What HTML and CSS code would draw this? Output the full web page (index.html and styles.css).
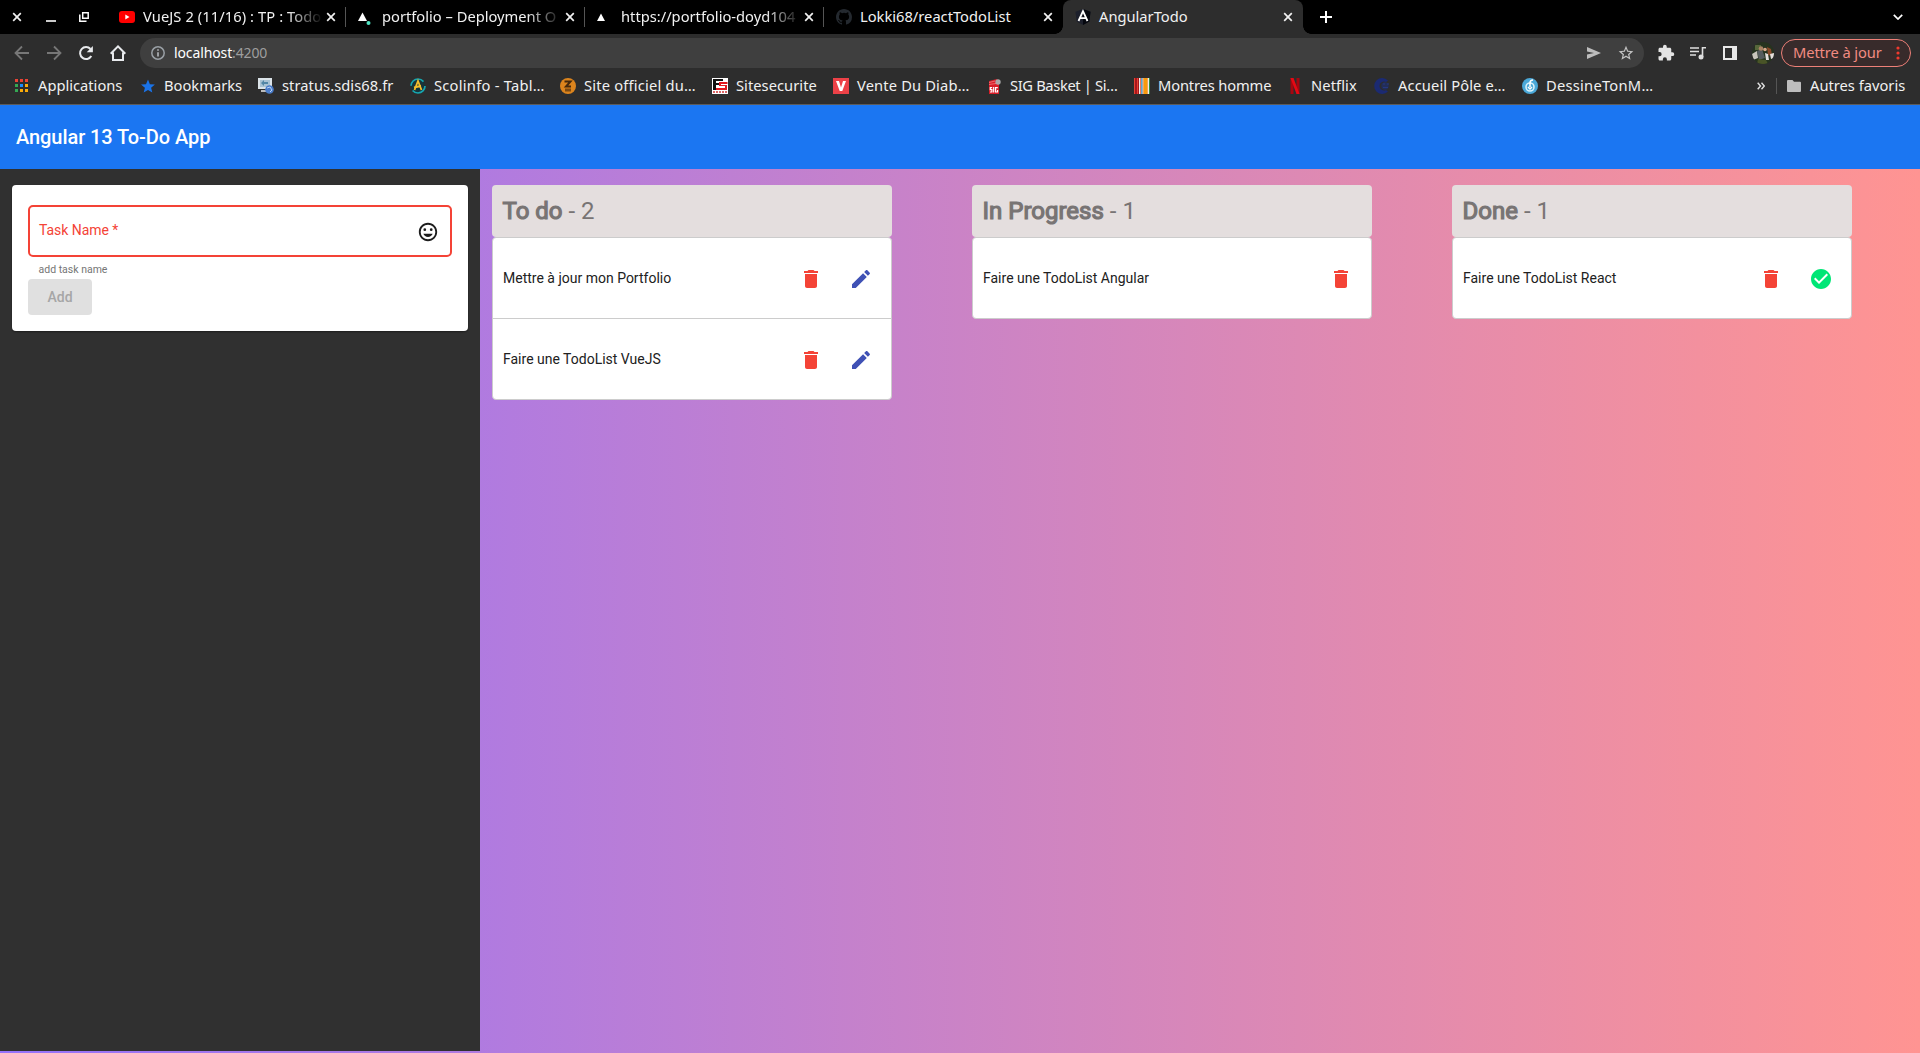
FILE: index.html
```html
<!DOCTYPE html>
<html lang="fr">
<head>
<meta charset="utf-8">
<title>AngularTodo</title>
<link rel="stylesheet" href="styles.css">
</head>
<body>
<svg class="defs" width="0" height="0">
  <symbol id="close" viewBox="0 0 10 10"><path d="M1.2 1.2l7.6 7.6M8.8 1.2L1.2 8.8" stroke="currentColor" stroke-width="1.7" fill="none"/></symbol>
  <symbol id="trash" viewBox="0 0 24 24"><path fill="currentColor" d="M6 19c0 1.1.9 2 2 2h8c1.100 0 2-.9 2-2V7H6v12zM19 4h-3.500l-1-1h-5l-1 1H5v2h14V4z"/></symbol>
  <symbol id="pencil" viewBox="0 0 24 24"><path fill="currentColor" d="M3 17.250V21h3.750L17.810 9.940l-3.750-3.750L3 17.250zM20.710 7.040c.39-.39.39-1.020 0-1.410l-2.340-2.340c-.39-.39-1.020-.39-1.410 0l-1.830 1.830 3.750 3.750 1.830-1.830z"/></symbol>
  <symbol id="done" viewBox="0 0 24 24"><path fill="currentColor" d="M12 2C6.480 2 2 6.480 2 12s4.480 10 10 10 10-4.480 10-10S17.520 2 12 2zm-2 15l-5-5 1.410-1.410L10 14.170l7.590-7.590L19 8l-9 9z"/></symbol>
</svg>

<header class="browser">
  <div class="tabstrip">
    <div class="window-buttons">
      <svg width="10" height="10"><use href="#close"/></svg>
      <svg width="10" height="10" viewBox="0 0 10 10"><path d="M0 9h10" stroke="#fff" stroke-width="1.600"/></svg>
      <svg width="10" height="10" viewBox="0 0 10 10" fill="none" stroke="#fff" stroke-width="1.500"><path d="M3.700.8h5.500v5.500H3.700zM.8 2.500v6.700h6.700"/></svg>
    </div>
    <div class="tab">
      <svg class="fav" viewBox="0 0 16 16"><rect y="2" width="16" height="12" rx="3" fill="#f00"/><path d="M6.300 5.500v5L10.500 8z" fill="#fff"/></svg>
      <span class="tab-title t1">VueJS 2 (11/16) : TP : Todo</span>
      <svg class="x" width="10" height="10"><use href="#close"/></svg>
    </div>
    <div class="tab">
      <svg class="fav" viewBox="0 0 16 16"><path d="M4.500 3.500L9 12H0z" fill="#fff"/><circle cx="10.500" cy="14" r="2" fill="#50e3c2"/></svg>
      <span class="tab-title t2">portfolio – Deployment O</span>
      <svg class="x" width="10" height="10"><use href="#close"/></svg>
    </div>
    <div class="tab">
      <svg class="fav" viewBox="0 0 16 16"><path d="M4 4.500L8 12H0z" fill="#fff"/></svg>
      <span class="tab-title t3">https://portfolio-doyd104</span>
      <svg class="x" width="10" height="10"><use href="#close"/></svg>
    </div>
    <div class="tab last">
      <svg class="fav" viewBox="0 0 16 16"><path fill="#24292f" d="M8 0C3.580 0 0 3.580 0 8c0 3.540 2.290 6.530 5.470 7.590.4.07.55-.17.55-.38 0-.19-.01-.82-.01-1.490-2.010.37-2.530-.49-2.690-.94-.09-.23-.48-.94-.82-1.130-.28-.15-.68-.52-.01-.53.63-.01 1.080.58 1.230.82.72 1.210 1.870.87 2.330.66.07-.52.28-.87.51-1.070-1.780-.2-3.640-.89-3.640-3.950 0-.87.31-1.590.82-2.150-.08-.2-.36-1.020.08-2.120 0 0 .67-.21 2.200.82a7.600 7.600 0 0 1 4 0c1.530-1.040 2.200-.82 2.200-.82.44 1.100.16 1.920.08 2.120.51.56.82 1.270.82 2.150 0 3.070-1.870 3.750-3.650 3.950.29.25.54.73.54 1.480 0 1.070-.01 1.930-.01 2.200 0 .21.15.46.55.38A8 8 0 0 0 16 8c0-4.420-3.580-8-8-8z"/></svg>
      <span class="tab-title t4">Lokki68/reactTodoList</span>
      <svg class="x" width="10" height="10"><use href="#close"/></svg>
    </div>
    <div class="tab active">
      <svg class="fav" viewBox="0 0 16 16"><path d="M8 0l7.500 2.700-1.200 9.800L8 16l-6.300-3.500L.5 2.700z" fill="#1c1f2b"/><path d="M8 0l7.500 2.700-1.200 9.800L8 16z" fill="#05070e"/><path d="M3.500 12L8 2.200 12.500 12M5.500 9.200h5" stroke="#fff" stroke-width="1.800" fill="none"/></svg>
      <span class="tab-title t5">AngularTodo</span>
      <svg class="x" width="10" height="10"><use href="#close"/></svg>
    </div>
    <svg class="new-tab" width="12" height="12" viewBox="0 0 12 12"><path d="M6 0v12M0 6h12" stroke="#fff" stroke-width="2"/></svg>
    <svg class="chevron" width="10" height="6" viewBox="0 0 10 6"><path d="M.8.8L5 5 9.200.8" stroke="#fff" stroke-width="1.700" fill="none"/></svg>
  </div>

  <div class="toolbar">
    <div class="nav">
      <svg class="dim" viewBox="0 0 16 16"><path d="M15 8H2M8 1.500L1.500 8 8 14.500"/></svg>
      <svg class="dim" viewBox="0 0 16 16"><path d="M1 8h13M8 1.500L14.500 8 8 14.500"/></svg>
      <svg viewBox="0 0 16 16"><path d="M13.300 11A6 6 0 1 1 12.500 4"/><path d="M14.900 1v6.200H8.700z" fill="#e8eaed" stroke="none"/></svg>
      <svg viewBox="0 0 16 16"><path d="M3 7.500V15h10V7.500M.7 8.700L8 1.400l7.300 7.300"/></svg>
    </div>
    <div class="omnibox">
      <svg width="14" height="14" viewBox="0 0 14 14"><circle cx="7" cy="7" r="6.200" fill="none" stroke="#9aa0a6" stroke-width="1.500"/><path d="M7 6.200v4.300M7 3.300v1.500" stroke="#bdc1c6" stroke-width="1.500"/></svg>
      <span class="url">localhost<i>:4200</i></span>
      <svg class="send" width="14" height="12" viewBox="0 0 14 12"><path d="M0 0l14 6-14 6V7.500L7 6 0 4.500z" fill="#bdbdbd"/></svg>
      <svg width="16" height="16" viewBox="0 0 24 24"><path fill="#c4c4c4" d="M23 9.240l-7.910-.68L12 1.300 8.910 8.570 1 9.240l6 5.200L5.200 22.200 12 18.080l6.800 4.120-1.790-7.760L23 9.240zM12 15.900l-4.100 2.480 1.090-4.660-3.610-3.130 4.760-.41L12 5.800l1.870 4.390 4.760.41-3.610 3.130 1.090 4.660z"/></svg>
    </div>
    <div class="actions">
      <svg width="18" height="18" viewBox="0 0 24 24"><path fill="#e4e4e4" d="M20.500 11H19V7c0-1.100-.9-2-2-2h-4V3.500a2.500 2.500 0 0 0-5 0V5H4c-1.100 0-2 .9-2 2v3.800h1.500a2.700 2.700 0 0 1 0 5.400H2V20c0 1.100.9 2 2 2h3.800v-1.500a2.700 2.700 0 0 1 5.400 0V22H17c1.100 0 2-.9 2-2v-4h1.500a2.500 2.500 0 0 0 0-5z"/></svg>
      <svg width="16" height="14" viewBox="0 0 16 14"><path d="M0 2h9M0 5.500h9M0 9h6M12.500 11V1.800H16" stroke="#dedede" stroke-width="1.600" fill="none"/><circle cx="11" cy="11" r="2.500" fill="#dedede"/></svg>
      <svg width="14" height="14" viewBox="0 0 14 14"><path d="M0 0h14v14H0zM2 2v10h7V2z" fill="#e8e8e8" fill-rule="evenodd"/></svg>
      <svg width="22" height="22" viewBox="0 0 22 22"><clipPath id="face"><circle cx="11" cy="11" r="11"/></clipPath><g clip-path="url(#face)"><rect width="22" height="22" fill="#26331f"/><path d="M3 3h6v5H3z" fill="#56673b"/><path d="M0 12l5-3 1 7-5 2z" fill="#c9c5bd"/><path d="M5 9l5-2 3 9-6 2z" fill="#555b5d"/><circle cx="9" cy="6.500" r="2.300" fill="#a88264"/><circle cx="13" cy="7.500" r="1.800" fill="#d3a487"/><path d="M15 5l4 2 1 7-4-1z" fill="#8a4a29"/><path d="M13 11l3 1 1 6h-3zM18 12l4-1v5l-3 1z" fill="#e4dfdc"/><path d="M6 17l8 1 2 4H5z" fill="#495427"/></g></svg>
    </div>
    <div class="update"><span>Mettre à jour</span><svg width="4" height="14" viewBox="0 0 4 14" fill="#f03a2e"><circle cx="2" cy="2" r="1.600"/><circle cx="2" cy="7" r="1.600"/><circle cx="2" cy="12" r="1.600"/></svg></div>
  </div>

  <nav class="bookmarks">
    <div class="bm b1"><svg viewBox="0 0 16 16"><path d="M1 1h3v3H1zM6 1h3v3H6zM11 1h3v3h-3z" fill="#ea4335"/><path d="M1 6h3v3H1zM1 11h3v3H1z" fill="#34a853"/><path d="M6 6h3v3H6z" fill="#1a8cff"/><path d="M11 6h3v3h-3zM6 11h3v3H6zM11 11h3v3h-3z" fill="#fbab09"/></svg><span>Applications</span></div>
    <div class="bm b2"><svg viewBox="0 0 16 16"><path d="M8 1.500l1.900 4.700 5 .3-3.800 3.200 1.200 4.900L8 12l-4.300 2.600 1.200-4.900L1 6.500l5-.3z" fill="#1a73e8"/></svg><span>Bookmarks</span></div>
    <div class="bm b3"><svg viewBox="0 0 16 16"><path d="M0 0h14v11H0z" fill="#dbe3e8"/><path d="M2 2h10v7H2z" fill="#a9c2d3"/><path d="M3 5l3-3v2h4v2H6v2z" fill="#5286a6"/><path d="M3 12h6v2H3z" fill="#bbb"/><circle cx="11.500" cy="11.500" r="4.300" fill="#4a7cc9"/><path d="M9 10l3-1 2 3-2 2" stroke="#b9d2f4" fill="none"/></svg><span>stratus.sdis68.fr</span></div>
    <div class="bm b4"><svg viewBox="0 0 16 16"><circle cx="8" cy="8" r="7" fill="#17343a" stroke="#16a6b0" stroke-width="1.700" stroke-dasharray="17 5"/><path d="M4.500 12L8 3l3.500 9M4 9.500l7-1.500" stroke="#f5bd2c" stroke-width="1.800" fill="none"/></svg><span>Scolinfo - Tabl…</span></div>
    <div class="bm b5"><svg viewBox="0 0 16 16"><circle cx="8" cy="8" r="8" fill="#dc841d"/><path d="M4.500 3.500h6L6 8.500h5" stroke="#45290d" stroke-width="2" fill="none"/><path d="M5 10.500h6v3H5z" fill="#7d4a13"/></svg><span>Site officiel du…</span></div>
    <div class="bm b6"><svg viewBox="0 0 16 16"><path d="M0 0h16v16H0z" fill="#fff"/><path d="M1 1h10v2H4v2h4v2H4v5H1z" fill="#111"/><path d="M15.500 4H7v4h6v2H4v2h11V7H9V6h6.500z" fill="#e1191f"/><path d="M1 14h14" stroke="#d66" stroke-width="2" stroke-dasharray="2 1"/></svg><span>Sitesecurite</span></div>
    <div class="bm b7"><svg viewBox="0 0 16 16"><path d="M0 0h16v16H0z" fill="#ec4147"/><path d="M3 3h3l2 6.500L10 3h3l-3.700 10H6.700z" fill="#fff"/></svg><span>Vente Du Diab…</span></div>
    <div class="bm b8"><svg viewBox="0 0 16 16"><path d="M3 3l8-2 2 4v11H3z" fill="#d91d28"/><circle cx="12" cy="4" r="2.700" fill="#a9a9a9"/><path d="M3 4.500l6-1.500M3 6.500l7-1" stroke="#f9a0a0" stroke-width=".6"/><path d="M6.200 9.700H4.300v2h1.600V14H4M7.700 9v5.500M11.800 9.700H9.600V14h2v-2" stroke="#fff" stroke-width="1.200" fill="none"/></svg><span>SIG Basket | Si…</span></div>
    <div class="bm b9"><svg viewBox="0 0 16 16"><path d="M0 0h16v16H0z" fill="#ef7657"/><path d="M0 0h1v16H0zM3 0h1v16H3z" fill="#e44332"/><path d="M1 0h2v16H1zM4 0h1v16H4z" fill="#a8161d"/><path d="M5 0h1v16H5zM8.500 0h1v16h-1zM13.500 0H15v16h-1.500z" fill="#f0ece7"/><path d="M7 0h1.500v16H7z" fill="#55a7d5"/><path d="M9.500 0h4v16h-4z" fill="#f79a0d"/><path d="M15 0h1v16h-1z" fill="#318c42"/></svg><span>Montres homme</span></div>
    <div class="bm b10"><svg viewBox="0 0 16 16"><path d="M3.500 0h3v16h-3zM9.500 0h3v16h-3z" fill="#a50710"/><path d="M3.500 0h3l6 16h-3z" fill="#e50914"/></svg><span>Netflix</span></div>
    <div class="bm b11"><svg viewBox="0 0 16 16"><path d="M14 2.500A8 8 0 1 0 14 13.500L12 12a4.500 4.500 0 1 1 0-8z" fill="#1b2a72"/><circle cx="11" cy="8" r="3.700" fill="#222d59"/><path d="M9 6h2M13 6h2M9 9.500h5" stroke="#26387f" stroke-width="1.200"/></svg><span>Accueil Pôle e…</span></div>
    <div class="bm b12"><svg viewBox="0 0 16 16"><circle cx="8" cy="8" r="8" fill="#4aa8d8"/><circle cx="8" cy="9" r="4" fill="none" stroke="#d9f1fa" stroke-width="1.600"/><path d="M8 9V5q0-3 3-3M6 9l2 2 2-2" stroke="#fff" stroke-width="1.500" fill="none"/></svg><span>DessineTonM…</span></div>
    <svg class="more" width="8" height="8" viewBox="0 0 8 8"><path d="M.7.800L3.500 4 .7 7.200M4.500.8L7.300 4 4.500 7.200" stroke="#e0e0e0" stroke-width="1.400" fill="none"/></svg>
    <div class="others"><svg width="14" height="12" viewBox="0 0 14 12"><path d="M1 0h4.500L7 1.700h6a1 1 0 0 1 1 1V11a1 1 0 0 1-1 1H1a1 1 0 0 1-1-1V1a1 1 0 0 1 1-1z" fill="#bdbdbd"/></svg><span>Autres favoris</span></div>
  </nav>
</header>

<div class="app-bar"><h1>Angular 13 To-Do App</h1></div>

<main class="page">
  <aside class="sidebar">
    <form class="card">
      <div class="field"><span>Task Name *</span>
        <svg width="22" height="22" viewBox="0 0 24 24"><path fill="#1d1d1d" d="M11.990 2C6.470 2 2 6.480 2 12s4.470 10 9.990 10C17.520 22 22 17.520 22 12S17.520 2 11.990 2zM12 20a8 8 0 1 1 0-16 8 8 0 0 1 0 16zm3.500-9a1.500 1.500 0 1 0 0-3 1.500 1.500 0 0 0 0 3zm-7 0a1.500 1.500 0 1 0 0-3 1.500 1.500 0 0 0 0 3zm3.500 6.500c2.330 0 4.310-1.460 5.110-3.500H6.890c.8 2.040 2.780 3.500 5.110 3.500z"/></svg>
      </div>
      <p class="hint">add task name</p>
      <button class="add" type="button" disabled>Add</button>
    </form>
  </aside>
  <section class="board">
    <article class="column">
      <h2><b>To do</b> - 2</h2>
      <ul>
        <li><span>Mettre à jour mon Portfolio</span><svg class="ico red"><use href="#trash"/></svg><svg class="ico blue"><use href="#pencil"/></svg></li>
        <li><span>Faire une TodoList VueJS</span><svg class="ico red"><use href="#trash"/></svg><svg class="ico blue"><use href="#pencil"/></svg></li>
      </ul>
    </article>
    <article class="column">
      <h2><b>In Progress</b> - 1</h2>
      <ul><li><span>Faire une TodoList Angular</span><svg class="ico red"><use href="#trash"/></svg></li></ul>
    </article>
    <article class="column">
      <h2><b>Done</b> - 1</h2>
      <ul><li><span>Faire une TodoList React</span><svg class="ico red"><use href="#trash"/></svg><svg class="ico green"><use href="#done"/></svg></li></ul>
    </article>
  </section>
</main>
</body>
</html>
```
FILE: styles.css
```css
* { box-sizing: border-box; margin: 0; padding: 0; }
body {
  height: 1053px;
  display: flex;
  flex-direction: column;
  overflow: hidden;
  font-family: Roboto, "Liberation Sans", sans-serif;
  background: #000;
}
svg { flex: none; display: block; }
.defs { display: none; }

/* Browser frame */
.browser {
  height: 105px;
  background: #2d2d2d;
  border-bottom: 1px solid #5b5b5b;
  font: 14.7px "Noto Sans", sans-serif;
  color: #f1f1f1;
}
.browser span { padding-bottom: 2px; }
.tabstrip { height: 34px; display: flex; align-items: center; background: #000; color: #f1f1f1; }
.window-buttons { width: 107px; padding-left: 12px; display: flex; gap: 24px; }
.window-buttons svg:nth-child(3) { margin-left: -1px; }
.tab {
  width: 239px;
  height: 34px;
  padding: 0 10px 0 12px;
  display: flex;
  align-items: center;
  background: linear-gradient(#555, #555) right 0 center / 1px 20px no-repeat;
}
.tab.last { background: none; }
.tab.active { width: 240px; background: #2d2d2d; border-radius: 8px 8px 0 0; position: relative; }
.tab.active::before, .tab.active::after {
  content: "";
  position: absolute;
  bottom: 0;
  width: 8px;
  height: 8px;
}
.tab.active::before { left: -8px; background: radial-gradient(circle at 0 0, #000 7.5px, #2d2d2d 8px); }
.tab.active::after { right: -8px; background: radial-gradient(circle at 100% 0, #000 7.5px, #2d2d2d 8px); }
.fav { width: 16px; height: 16px; }
.tab-title {
  flex: 1;
  margin-left: 8px;
  white-space: nowrap;
}
.t1, .t2, .t3 { mask-image: linear-gradient(to right, #000 145px, transparent 180px); }
.t1 { letter-spacing: .08px; }
.t2 { margin-left: 8px; }
.t3 { margin-left: 8px; }
.new-tab { margin-left: 17px; }
.chevron { margin-left: auto; margin-right: 17px; }

.toolbar { height: 38px; display: flex; align-items: center; padding: 0 9px 0 14px; }
.nav { display: flex; gap: 16px; width: 126px; }
.nav svg { width: 16px; height: 16px; fill: none; stroke: #e8eaed; stroke-width: 2; }
.nav svg.dim { stroke: #777; stroke-width: 1.8; }
.omnibox {
  width: 1504px;
  height: 30px;
  border-radius: 15px;
  background: #3f3f3f;
  display: flex;
  align-items: center;
  padding: 0 10px 0 11px;
}
.url { margin-left: 9px; flex: 1; color: #fff; font-size: 14px; letter-spacing: -.12px; }
.url i { font-style: normal; color: #9e9e9e; }
.send { margin-right: 17px; }
.actions { display: flex; align-items: center; gap: 16px; padding-left: 13px; width: 137px; }
.actions svg:nth-child(2), .actions svg:nth-child(4) { margin-left: -1px; }
.actions svg:nth-child(3) { margin-left: 1px; }
.update {
  flex: 1;
  height: 28px;
  border: 1px solid #ee8078;
  border-radius: 14px;
  background: #382b2b;
  color: #f28b82;
  display: flex;
  align-items: center;
  justify-content: space-between;
  padding: 0 10px 0 11px;
  white-space: nowrap;
  letter-spacing: -.1px;
}

.bookmarks { height: 28px; display: flex; align-items: center; padding-left: 14px; white-space: nowrap; }
.bm { display: flex; align-items: center; gap: 8px; flex: none; }
.bm svg { width: 16px; height: 16px; }
.b1 { width: 126px; }
.b2 { width: 118px; }
.b3 { width: 152px; letter-spacing: .06px; }
.b4 { width: 150px; letter-spacing: .25px; }
.b5 { width: 152px; letter-spacing: .2px; }
.b6 { width: 121px; letter-spacing: .04px; }
.b7 { width: 153px; letter-spacing: .15px; }
.b8 { width: 148px; letter-spacing: -.35px; }
.b9 { width: 153px; letter-spacing: -.15px; }
.b10 { width: 87px; letter-spacing: .1px; }
.b11 { width: 148px; letter-spacing: .12px; }
.b12 { width: 235px; letter-spacing: .25px; }
.others {
  display: flex;
  align-items: center;
  gap: 9px;
  margin-left: 11px;
  padding-left: 11px;
  background: linear-gradient(#555, #555) left center / 1px 16px no-repeat;
}

/* Application */
.app-bar { height: 64px; flex: none; background: #1b76f2; padding: 0 16px; display: flex; align-items: center; }
.app-bar h1 { font-size: 20px; font-weight: 500; color: #fff; letter-spacing: -.07px; }
.page {
  flex: 1;
  display: flex;
  align-items: flex-start;
  background: linear-gradient(to right, #9672fa, #ff9492);
}
.sidebar { width: 480px; height: 882px; background: #303030; padding: 16px 12px; }
.card {
  height: 146px;
  padding: 20px 16px 16px;
  background: #fff;
  border-radius: 4px;
  box-shadow: 0 1px 2px rgba(0, 0, 0, .4);
}
.field {
  height: 52px;
  border: 2px solid #f44336;
  border-radius: 5px;
  padding: 0 11px 0 9px;
  display: flex;
  align-items: center;
  justify-content: space-between;
  color: #f44336;
  font-size: 14px;
}
.field span { margin-top: -2px; letter-spacing: -.05px; }
.field svg { margin-top: 1px; }
.hint { height: 22px; padding: 6px 0 0 10.5px; font-size: 10.5px; line-height: 13px; color: #757575; }
.add {
  width: 64px;
  height: 36px;
  border: 0;
  border-radius: 4px;
  background: #e0e0e0;
  color: #a6a6a6;
  font: 500 14px Roboto, sans-serif;
}
.board { flex: 1; display: flex; gap: 80px; padding: 16px 12px; }
.column { width: 400px; flex: none; }
.column h2 {
  height: 52px;
  padding-left: 10.5px;
  border-radius: 4px;
  background: #e4dede;
  color: #787474;
  font-size: 24px;
  font-weight: 400;
  line-height: 53px;
}
.column b { font-weight: 400; -webkit-text-stroke: 1.2px #787474; }
.column ul { list-style: none; border: 1px solid #ccc; border-radius: 4px; background: #fff; }
.column li { height: 80px; padding: 0 18px 0 10px; display: flex; align-items: center; gap: 26px; font-size: 14px; color: #212121; }
.column li + li { height: 81px; border-top: 1px solid #ccc; }
.column li span { flex: 1; }
.ico { width: 24px; height: 24px; margin-top: 2px; }
.red { color: #f44336; }
.blue { color: #3f51b5; }
.green { color: #00e676; }
```
